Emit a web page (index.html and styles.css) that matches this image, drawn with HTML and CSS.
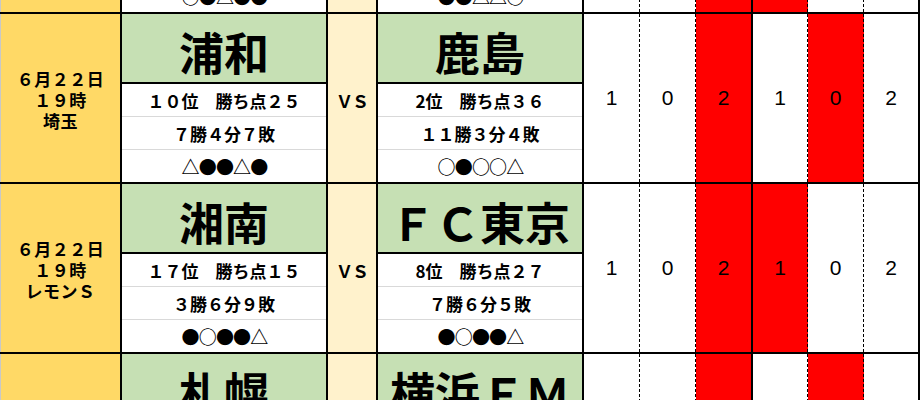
FILE: index.html
```html
<!DOCTYPE html>
<html lang="ja">
<head>
<meta charset="utf-8">
<title>対戦表</title>
<link rel="stylesheet" href="styles.css">
</head>
<body>
<div class="sheet">
  <div class="match">
    <div class="cell date"><span>６月２２日</span><span>１９時</span><span>等々力</span></div>
    <div class="cell team">
      <div class="name">川崎</div>
      <div class="info">５位　勝ち点２８</div>
      <div class="info">８勝４分５敗</div>
      <div class="info res">○●△●●</div>
    </div>
    <div class="cell vs">ＶＳ</div>
    <div class="cell team">
      <div class="name">神戸</div>
      <div class="info">3位　勝ち点３２</div>
      <div class="info">９勝５分３敗</div>
      <div class="info res">●●△△○</div>
    </div>
    <div class="cell num n1">1</div>
    <div class="cell num n2">0</div>
    <div class="cell num n3 red">2</div>
    <div class="cell num n4 red">1</div>
    <div class="cell num n5">0</div>
    <div class="cell num n6">2</div>
  </div>

  <div class="match">
    <div class="cell date"><span>６月２２日</span><span>１９時</span><span>埼玉</span></div>
    <div class="cell team">
      <div class="name">浦和</div>
      <div class="info">１０位　勝ち点２５</div>
      <div class="info">７勝４分７敗</div>
      <div class="info res">△●●△●</div>
    </div>
    <div class="cell vs">ＶＳ</div>
    <div class="cell team">
      <div class="name">鹿島</div>
      <div class="info">2位　勝ち点３６</div>
      <div class="info">１１勝３分４敗</div>
      <div class="info res">○●○○△</div>
    </div>
    <div class="cell num n1">1</div>
    <div class="cell num n2">0</div>
    <div class="cell num n3 red">2</div>
    <div class="cell num n4">1</div>
    <div class="cell num n5 red">0</div>
    <div class="cell num n6">2</div>
  </div>

  <div class="match">
    <div class="cell date"><span>６月２２日</span><span>１９時</span><span>レモンＳ</span></div>
    <div class="cell team">
      <div class="name">湘南</div>
      <div class="info">１７位　勝ち点１５</div>
      <div class="info">３勝６分９敗</div>
      <div class="info res">●○●●△</div>
    </div>
    <div class="cell vs">ＶＳ</div>
    <div class="cell team">
      <div class="name">ＦＣ東京</div>
      <div class="info">8位　勝ち点２７</div>
      <div class="info">７勝６分５敗</div>
      <div class="info res">●○●●△</div>
    </div>
    <div class="cell num n1">1</div>
    <div class="cell num n2">0</div>
    <div class="cell num n3 red">2</div>
    <div class="cell num n4 red">1</div>
    <div class="cell num n5">0</div>
    <div class="cell num n6">2</div>
  </div>

  <div class="match">
    <div class="cell date"><span>６月２２日</span><span>１９時</span><span>札幌ド</span></div>
    <div class="cell team">
      <div class="name">札幌</div>
      <div class="info">１２位　勝ち点２２</div>
      <div class="info">６勝４分８敗</div>
      <div class="info res">●○△●○</div>
    </div>
    <div class="cell vs">ＶＳ</div>
    <div class="cell team">
      <div class="name">横浜ＦＭ</div>
      <div class="info">4位　勝ち点３０</div>
      <div class="info">９勝３分６敗</div>
      <div class="info res">○○●△○</div>
    </div>
    <div class="cell num n1">1</div>
    <div class="cell num n2">0</div>
    <div class="cell num n3 red">2</div>
    <div class="cell num n4">1</div>
    <div class="cell num n5 red">0</div>
    <div class="cell num n6">2</div>
  </div>
</div>
</body>
</html>
```

FILE: styles.css
```css
* { box-sizing: border-box; }

html, body {
  margin: 0;
  padding: 0;
  width: 920px;
  height: 400px;
  overflow: hidden;
  background: #fff;
}

body {
  font-family: "Noto Sans CJK JP", "Noto Sans", sans-serif;
  color: #000;
}

.sheet {
  margin-top: -158px;
  display: flex;
  flex-direction: column;
}

.match {
  display: flex;
  height: 170px;
  border-top: 2px solid #000;
}

.cell {
  height: 168px;
  flex: none;
}

.date {
  width: 122px;
  background: #ffd966;
  border-left: 1px solid #c8c8c8;
  border-right: 2px solid #000;
  display: flex;
  flex-direction: column;
  align-items: center;
  justify-content: center;
  font-weight: 700;
  font-size: 17px;
  letter-spacing: 0.5px;
  line-height: 21px;
  padding-top: 2px;
}

.team {
  width: 206px;
  border-right: 2px solid #000;
  display: flex;
  flex-direction: column;
}

.name {
  height: 70px;
  background: #c6e0b4;
  border-bottom: 2px solid #000;
  display: flex;
  align-items: center;
  justify-content: center;
  font-size: 45px;
  font-weight: 700;
  line-height: 1;
  padding-top: 6px;
  white-space: nowrap;
}

.info {
  height: 33px;
  display: flex;
  align-items: center;
  justify-content: center;
  font-size: 17px;
  font-weight: 700;
  line-height: 1;
  border-bottom: 1px solid #d9d9d9;
  white-space: nowrap;
}

.info:last-child {
  height: 32px;
  border-bottom: none;
}

.res {
  font-size: 18px;
  letter-spacing: -0.8px;
  padding-left: 1px;
}

.vs {
  width: 50px;
  background: #fff2cc;
  border-right: 2px solid #000;
  display: flex;
  align-items: center;
  justify-content: center;
  font-size: 17px;
  font-weight: 700;
  letter-spacing: -1px;
  padding-top: 4px;
}

.num {
  display: flex;
  align-items: center;
  justify-content: center;
  font-family: "Liberation Sans", Arial, sans-serif;
  font-size: 21px;
  background: #fff;
}

.n1, .n2, .n4, .n5 { border-right: 1px dashed #000; }
.n3, .n6 { border-right: 2px solid #000; }

.n1 { width: 56px; }
.n2 { width: 56px; }
.n3 { width: 57px; }
.n4 { width: 55px; }
.n5 { width: 56px; }
.n6 { width: 56px; }

.red { background: #ff0000; }
```
